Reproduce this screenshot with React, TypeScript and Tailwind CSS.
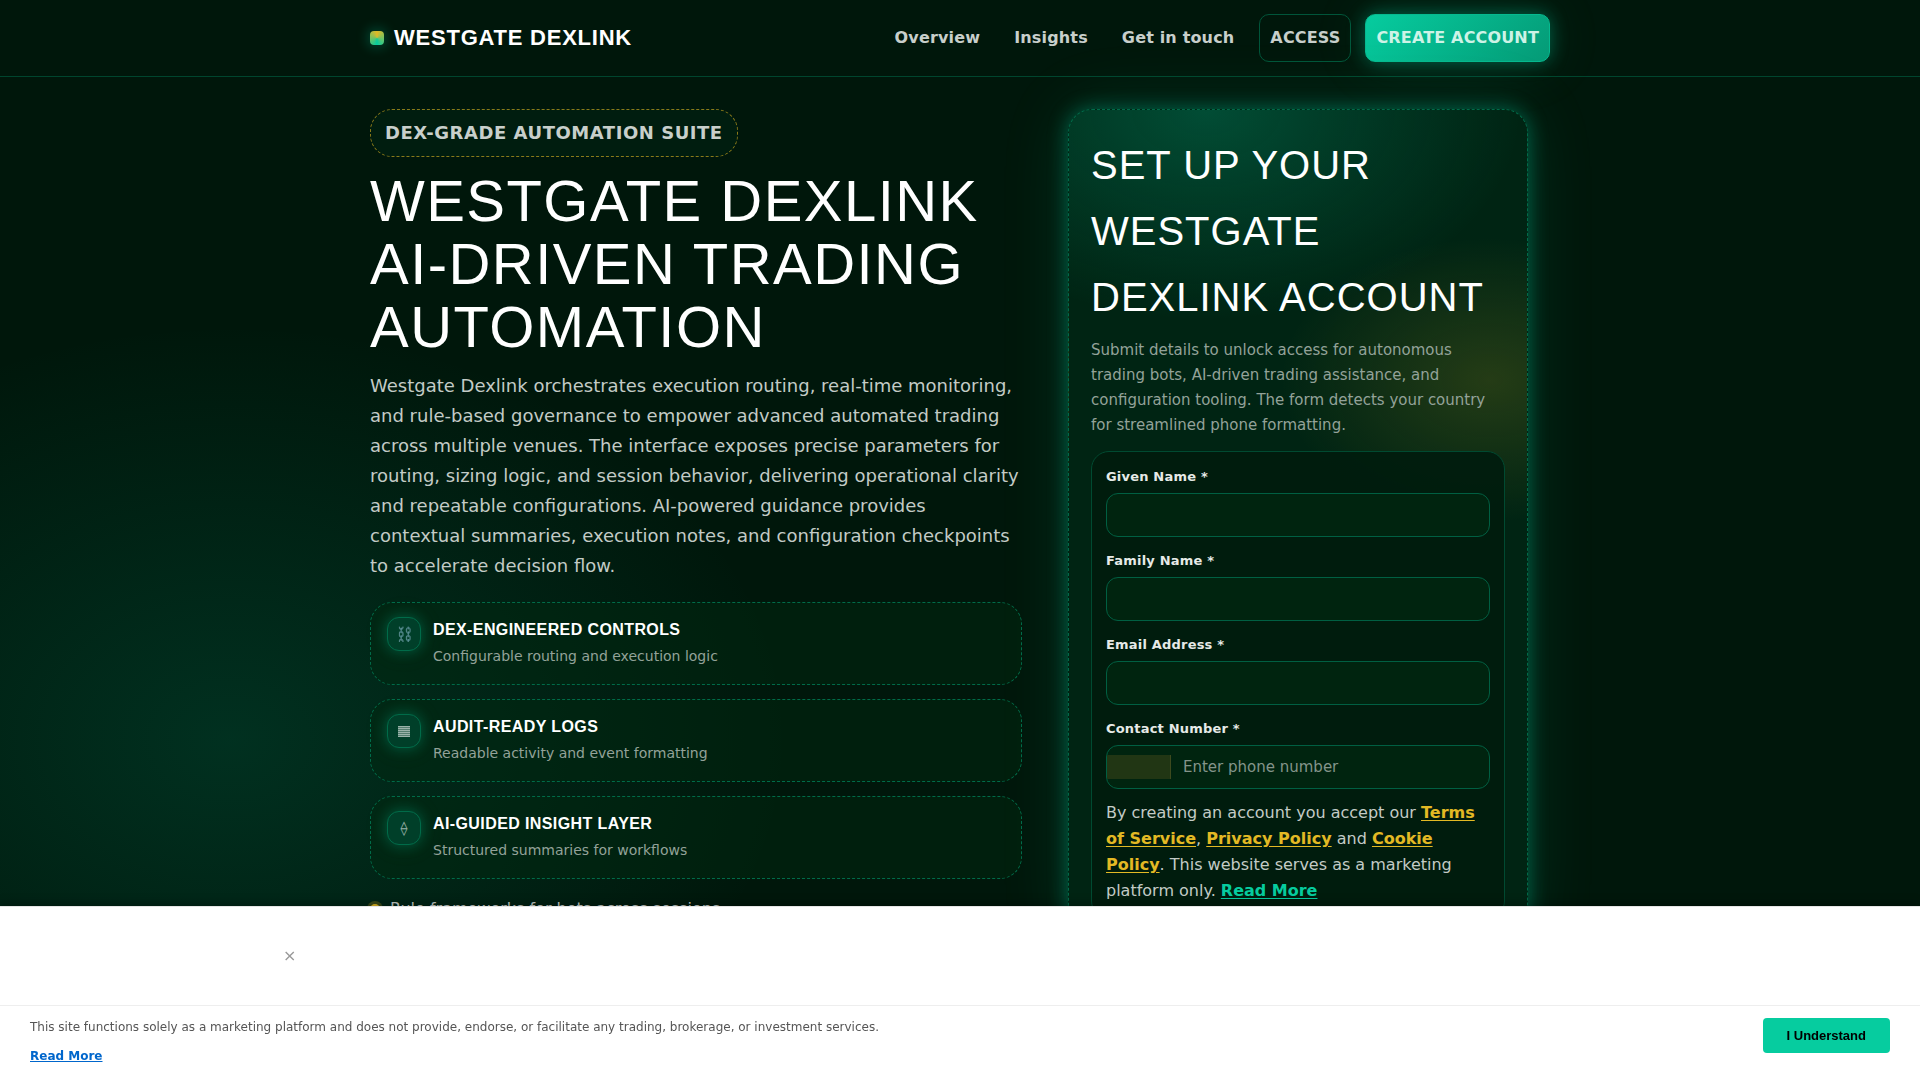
import { useState } from "react";

const NAV_LINKS = ["Overview", "Insights", "Get in touch"];

function LogIcon() {
  return (
    <svg width="12" height="11" viewBox="0 0 12 11" fill="currentColor" shapeRendering="crispEdges">
      <rect width="12" height="11" opacity="0.55" />
      <rect y="0" width="12" height="1" />
      <rect y="2" width="12" height="1" />
      <rect y="4" width="12" height="1" />
      <rect y="6" width="12" height="1" />
      <rect y="8" width="12" height="1" />
      <rect y="10" width="12" height="1" />
    </svg>
  );
}

const FEATURES = [
  { icon: "⛓️", title: "Dex-engineered controls", text: "Configurable routing and execution logic" },
  { icon: <LogIcon />, title: "Audit-ready logs", text: "Readable activity and event formatting" },
  { icon: "⟠", title: "AI-guided insight layer", text: "Structured summaries for workflows" },
];

const FIELDS = [
  { id: "given-name", label: "Given Name *", type: "text" },
  { id: "family-name", label: "Family Name *", type: "text" },
  { id: "email", label: "Email Address *", type: "email" },
];

const DISPLAY = "font-['Liberation_Sans',Arial,sans-serif]";
const FIELD_LABEL = "text-[13px] leading-[22px] font-bold tracking-[0.015em] text-[#e6eae7]";
const FIELD_BOX = "h-11 w-full rounded-xl border border-[#005f42] bg-[#00240f]";
const LEGAL_LINK = "font-bold text-[#e3b924] underline underline-offset-2";

function Header() {
  return (
    <header className="border-b border-[#00452e] bg-[#00170b]/60">
      <div className="mx-auto flex h-[76px] max-w-[1180px] items-center justify-between">
        <a href="#" className="flex items-center gap-[10px]">
          <span className="h-[14px] w-[14px] rounded bg-[conic-gradient(#e3b924,#06cc9f,#e3b924)] shadow-[0_0_14px_rgba(6,204,159,0.45)]" />
          <span className={`${DISPLAY} text-[22px] leading-8 font-bold uppercase tracking-[0.035em] text-white`}>
            Westgate Dexlink
          </span>
        </a>
        <nav className="flex items-center text-base font-bold tracking-[0.01em] text-[#c8cfcb]">
          <div className="mr-[25px] flex gap-[34px]">
            {NAV_LINKS.map((link) => (
              <a key={link} href="#">
                {link}
              </a>
            ))}
          </div>
          <a
            href="#"
            className="mr-[14px] flex h-12 items-center rounded-[10px] border border-[#00553a] px-[10px] uppercase"
          >
            Access
          </a>
          <a
            href="#"
            className="flex h-12 items-center rounded-[10px] border border-[#06b98f] bg-linear-[135deg,#06cc9f,#059a76] px-[10px] uppercase text-[#cdf3e6] shadow-[0_0_18px_rgba(6,204,159,0.4),0_0_60px_rgba(6,204,159,0.12)]"
          >
            Create account
          </a>
        </nav>
      </div>
    </header>
  );
}

function Intro() {
  return (
    <section>
      <p className="inline-flex h-12 items-center rounded-[22px] border border-dashed border-[#8a7a1a] bg-[#001d0f] px-[14px] text-lg font-bold uppercase tracking-[0.03em] text-[#c8cfcb]">
        Dex-grade automation suite
      </p>
      <h1
        className={`${DISPLAY} mt-3 text-[58px] leading-[63px] uppercase tracking-wide text-white`}
      >
        Westgate Dexlink AI-driven trading automation
      </h1>
      <p className="mt-[13px] text-lg leading-[30px] text-[#c3cbc6]">
        Westgate Dexlink orchestrates execution routing, real-time monitoring, and rule-based
        governance to empower advanced automated trading across multiple venues. The interface
        exposes precise parameters for routing, sizing logic, and session behavior, delivering
        operational clarity and repeatable configurations. AI-powered guidance provides contextual
        summaries, execution notes, and configuration checkpoints to accelerate decision flow.
      </p>

      <ul className="mt-[21px] grid gap-[14px]">
        {FEATURES.map((f) => (
          <li
            key={f.title}
            className="flex gap-3 rounded-[22px] border border-dashed border-[#006b49] bg-[#00280f]/50 px-4 pt-[14px] pb-4"
          >
            <span className="flex h-[34px] w-[34px] shrink-0 items-center justify-center rounded-xl border border-[#006b49] bg-[#003f29] text-sm text-white shadow-[0_0_14px_rgba(6,204,159,0.3),0_0_30px_rgba(6,204,159,0.08)]">
              <span aria-hidden="true" className="opacity-60">
                {f.icon}
              </span>
            </span>
            <div>
              <h3
                className={`${DISPLAY} text-base leading-[26px] font-bold uppercase tracking-wide text-white`}
              >
                {f.title}
              </h3>
              <p className="mt-[2px] text-sm leading-[23px] text-[#93a299]">{f.text}</p>
            </div>
          </li>
        ))}
      </ul>

      <ul className="mt-4">
        <li className="flex items-center gap-[10px] text-base leading-7 text-[#c3cbc6]">
          <span className="h-[10px] w-[10px] rounded-full bg-[#e3b924] shadow-[0_0_0_3px_rgba(227,185,36,0.25)]" />
          Rule frameworks for bots across sessions
        </li>
      </ul>
    </section>
  );
}

function SignupCard() {
  return (
    <section className="rounded-3xl border border-dashed border-[#006b49] bg-[radial-gradient(420px_280px_at_30%_0%,rgba(6,204,159,0.24),transparent_75%),radial-gradient(280px_190px_at_92%_270px,rgba(227,185,36,0.16),transparent_75%)] bg-[#002413] p-[22px] shadow-[0_0_20px_rgba(6,204,159,0.4),0_0_70px_rgba(6,204,159,0.14)]">
      <h2 className={`${DISPLAY} text-[40px] leading-[66px] uppercase tracking-wide text-white`}>
        Set up your Westgate Dexlink account
      </h2>
      <p className="mt-2 text-[15px] leading-[25px] text-[#93a299]">
        Submit details to unlock access for autonomous trading bots, AI-driven trading assistance,
        and configuration tooling. The form detects your country for streamlined phone formatting.
      </p>

      <form
        onSubmit={(e) => e.preventDefault()}
        className="mt-[13px] rounded-[18px] border border-[#004a31] bg-[#001c0d]/90 p-[14px]"
      >
        <div className="grid gap-[13px]">
          {FIELDS.map((field) => (
            <div key={field.id} className="grid gap-[5px]">
              <label htmlFor={field.id} className={FIELD_LABEL}>
                {field.label}
              </label>
              <input
                id={field.id}
                type={field.type}
                className={`${FIELD_BOX} px-3 text-base text-white outline-none`}
              />
            </div>
          ))}

          <div className="grid gap-[5px]">
            <label htmlFor="phone" className={FIELD_LABEL}>
              Contact Number *
            </label>
            <div className={`${FIELD_BOX} flex items-center overflow-hidden`}>
              <span className="h-6 w-16 border-r border-[#3d4a1e] bg-[#213614]" />
              <input
                id="phone"
                type="tel"
                placeholder="Enter phone number"
                className="min-w-0 flex-1 bg-transparent px-3 text-[15px] text-white outline-none placeholder:text-[#84948a]"
              />
            </div>
          </div>
        </div>

        <p className="mt-[11px] text-base leading-[26px] text-[#c3cbc6]">
          By creating an account you accept our{" "}
          <a href="#" className={LEGAL_LINK}>
            Terms of Service
          </a>
          ,{" "}
          <a href="#" className={LEGAL_LINK}>
            Privacy Policy
          </a>{" "}
          and{" "}
          <a href="#" className={LEGAL_LINK}>
            Cookie Policy
          </a>
          . This website serves as a marketing platform only.{" "}
          <a href="#" className="font-bold text-[#06cc9f] underline underline-offset-2">
            Read More
          </a>
        </p>
      </form>
    </section>
  );
}

function NoticeBar({ onClose }: { onClose: () => void }) {
  return (
    <aside className="fixed inset-x-0 bottom-0 border-t border-[#e5e5e5] bg-white shadow-[0_-2px_10px_rgba(0,0,0,0.3)]">
      <div className="mx-auto flex h-[98px] max-w-[1354px] items-center">
        <button type="button" aria-label="Close" onClick={onClose} className="text-base text-[#999999]">
          ×
        </button>
      </div>
      <div className="flex items-start justify-between border-t border-[#eeeeee] px-[30px] pt-3 pb-[15px]">
        <div className="text-xs leading-[18px] text-[#555555]">
          <p>
            This site functions solely as a marketing platform and does not provide, endorse, or
            facilitate any trading, brokerage, or investment services.
          </p>
          <a href="#" className="mt-[11px] block font-bold text-[#0066cc] underline">
            Read More
          </a>
        </div>
        <button
          type="button"
          onClick={onClose}
          className={`${DISPLAY} h-[35px] rounded bg-[#06cc9f] px-6 text-[13px] font-bold text-black`}
        >
          I Understand
        </button>
      </div>
    </aside>
  );
}

export default function App() {
  const [noticeOpen, setNoticeOpen] = useState(true);

  return (
    <div className="min-h-screen bg-[#00170b] bg-[radial-gradient(700px_520px_at_230px_740px,rgba(6,204,159,0.14),transparent_80%)] font-['DejaVu_Sans',sans-serif]">
      <Header />
      <main className="mx-auto grid max-w-[1180px] grid-cols-[minmax(0,1fr)_460px] gap-[46px] pt-8 pr-[22px]">
        <Intro />
        <SignupCard />
      </main>
      {noticeOpen ? <NoticeBar onClose={() => setNoticeOpen(false)} /> : null}
    </div>
  );
}
